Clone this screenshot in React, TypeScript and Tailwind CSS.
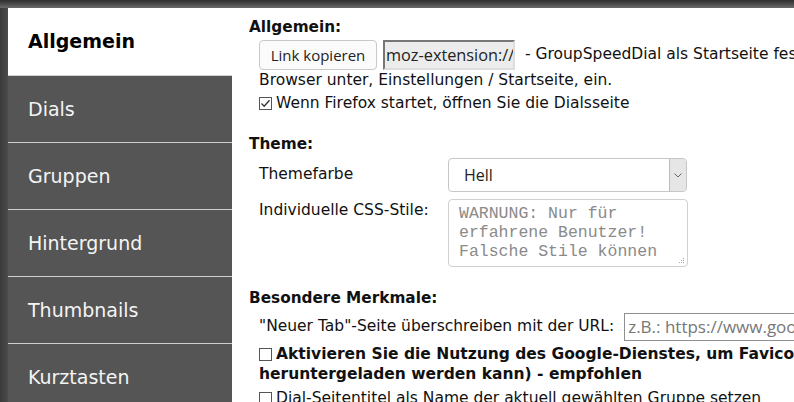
import React from "react";

const menu = ["Allgemein", "Dials", "Gruppen", "Hintergrund", "Thumbnails", "Kurztasten"];

const Box = ({ checked = false }: { checked?: boolean }) => (
  <span className="inline-flex w-[13px] h-[13px] shrink-0 items-center justify-center border border-[#555] bg-white mr-[4px]">
    {checked && (
      <svg width="11" height="11" viewBox="0 0 11 11">
        <path d="M1.5 5.5 L4.2 8.3 L9.5 2.2" fill="none" stroke="#333" strokeWidth="1.3" />
      </svg>
    )}
  </span>
);

const Sidebar = () => (
  <div className="w-[224px] shrink-0 bg-[#555555] flex flex-col">
    {menu.map((item, i) => (
      <div
        key={item}
        className={
          i === 0
            ? "h-[68px] shrink-0 flex items-center pl-5 bg-white text-black font-bold text-[19px] border-b border-[#cfcfcf]"
            : "h-[67px] shrink-0 flex items-center pl-5 text-[#f4f4f4] text-[19px] border-b border-[#cfcfcf]"
        }
      >
        {item}
      </div>
    ))}
  </div>
);

const GeneralSection = () => (
  <div>
    <div className="font-bold text-[15.3px] pt-[10px] leading-[18px]">Allgemein:</div>
    <div className="pl-[10px]">
      <div className="flex items-center mt-[4px] whitespace-nowrap">
        <button className="h-[30px] w-[118px] shrink-0 rounded-[4px] border border-[#c9c9c9] bg-[#fbfbfb] text-[15px] font-['Open_Sans',sans-serif] text-[#222]">
          Link kopieren
        </button>
        <div className="ml-[6px] h-[30px] w-[132px] shrink-0 border-2 border-t-[#777] border-l-[#777] border-b-[#ddd] border-r-[#ddd] bg-[#ececec] flex items-center pl-[1px] text-[16.3px] font-['Open_Sans',sans-serif] text-[#222] overflow-hidden">
          moz-extension://
        </div>
        <span className="ml-[10px] shrink-0 text-[15.5px]">- GroupSpeedDial als Startseite festlegen: Tragen Sie diese Adresse im</span>
      </div>
      <div className="text-[15.5px] leading-[22px] mt-[-1px] whitespace-nowrap">
        Browser unter, Einstellungen / Startseite, ein.
      </div>
      <label className="flex items-center text-[15.5px] leading-[24px] whitespace-nowrap">
        <Box checked />
        Wenn Firefox startet, öffnen Sie die Dialsseite
      </label>
    </div>
  </div>
);

const ThemeSection = () => (
  <div className="mt-[20px]">
    <div className="font-bold text-[15.3px] leading-[18px]">Theme:</div>
    <div className="pl-[10px]">
      <div className="flex items-center mt-[5px]">
        <div className="w-[189px] text-[15.5px]">Themefarbe</div>
        <div className="w-[239px] h-[34px] rounded-[4px] border border-[#c6c6c6] flex overflow-hidden bg-white">
          <div className="flex-1 flex items-center pl-[15px] text-[16px] font-['Open_Sans',sans-serif] text-[#222]">
            Hell
          </div>
          <div className="w-[17px] bg-[#e6e6e6] border-l border-[#bbb] flex items-center justify-center">
            <svg width="8" height="5" viewBox="0 0 8 5">
              <path d="M0.5 0.5 L4 4 L7.5 0.5" fill="none" stroke="#666" strokeWidth="1" />
            </svg>
          </div>
        </div>
      </div>
      <div className="flex items-start mt-[7px]">
        <div className="w-[189px] text-[15.5px]">Individuelle CSS-Stile:</div>
        <div className="relative w-[240px] h-[68px] rounded-[4px] border border-[#d0d0d0] bg-white pl-[10px] pt-[4px] font-['Liberation_Mono',monospace] text-[16.5px] leading-[19px] text-[#8a8a8a] overflow-hidden whitespace-nowrap">
          <div>WARNUNG: Nur für</div>
          <div>erfahrene Benutzer!</div>
          <div>Falsche Stile können</div>
          <svg className="absolute right-[2px] bottom-[2px]" width="7" height="7" viewBox="0 0 7 7">
            <g fill="#aaa">
              <rect x="5" y="1" width="1" height="1" />
              <rect x="3" y="3" width="1" height="1" />
              <rect x="5" y="3" width="1" height="1" />
              <rect x="1" y="5" width="1" height="1" />
              <rect x="3" y="5" width="1" height="1" />
              <rect x="5" y="5" width="1" height="1" />
            </g>
          </svg>
        </div>
      </div>
    </div>
  </div>
);

const FeaturesSection = () => (
  <div className="mt-[22px]">
    <div className="font-bold text-[15.3px] leading-[18px]">Besondere Merkmale:</div>
    <div className="pl-[10px]">
      <div className="flex items-center mt-[6px] whitespace-nowrap">
        <span className="text-[15.5px]">"Neuer Tab"-Seite überschreiben mit der URL:</span>
        <div className="ml-[10px] h-[28px] w-[260px] shrink-0 border border-[#8f8f8f] flex items-center pl-[3px] text-[17px] font-['Open_Sans',sans-serif] text-[#777]">
          z.B.: https://www.google.de
        </div>
      </div>
      <div className="mt-[3px] text-[15.5px] font-bold leading-[20px] whitespace-nowrap">
        <div className="flex items-center">
          <Box />
          Aktivieren Sie die Nutzung des Google-Dienstes, um Favicons zu laden (wenn kein Favicon
        </div>
        <div>heruntergeladen werden kann) - empfohlen</div>
      </div>
      <label className="flex items-center mt-[4px] text-[15.5px] leading-[20px] whitespace-nowrap">
        <Box />
        Dial-Seitentitel als Name der aktuell gewählten Gruppe setzen
      </label>
    </div>
  </div>
);

export default function App() {
  return (
    <div className="w-[794px] h-[402px] overflow-hidden flex flex-col bg-[#464646] font-['DejaVu_Sans',Verdana,sans-serif] text-[#111]">
      <div className="h-2 shrink-0 bg-gradient-to-b from-[#2e2e2e] to-[#6a6a6a]" />
      <div className="flex flex-1 min-h-0">
        <div className="w-2 shrink-0 bg-gradient-to-r from-[#3a3a3a] to-[#4c4c4c]" />
        <Sidebar />
        <div className="flex-1 min-w-0 bg-white pl-[17px] overflow-hidden">
          <GeneralSection />
          <ThemeSection />
          <FeaturesSection />
        </div>
      </div>
    </div>
  );
}
